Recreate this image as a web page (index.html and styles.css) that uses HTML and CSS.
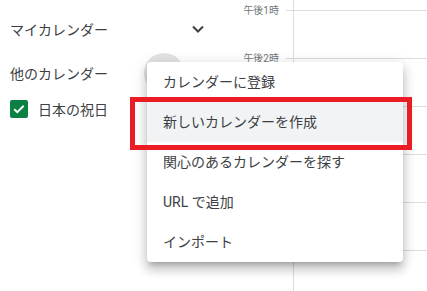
FILE: index.html
```html
<!DOCTYPE html>
<html lang="ja">
<head>
  <meta charset="UTF-8">
  <title>カレンダー</title>
  <meta name="viewport" content="width=device-width, initial-scale=1.0">
  <link rel="stylesheet" href="styles.css">
</head>
<body>
  <div class="page">
    <aside class="sidebar">
      <div class="side-row first">
        <span class="side-title">マイカレンダー</span>
        <span class="icon-btn chevron">
          <svg width="12" height="8" viewBox="0 0 12 8"><path d="M1 1.5l5 5 5-5" fill="none" stroke="#3c4043" stroke-width="2"/></svg>
        </span>
      </div>
      <div class="side-row second">
        <span class="side-title">他のカレンダー</span>
        <span class="add-btn"></span>
        <span class="icon-btn chevron"></span>
      </div>
      <div class="side-row cal">
        <span class="check">
          <svg width="18" height="18" viewBox="0 0 18 18"><path d="M4.2 9.2l3.1 3 6.4-6.4" fill="none" stroke="#fff" stroke-width="2"/></svg>
        </span>
        <span class="cal-name">日本の祝日</span>
      </div>
    </aside>

    <!-- labels below 2pm sit under the menu -->
    <div class="gutter">
      <div class="hour"><span class="hour-label">午後1時</span><span class="tick"></span></div>
      <div class="hour"><span class="hour-label">午後2時</span><span class="tick"></span></div>
      <div class="hour"><span class="hour-label"></span><span class="tick"></span></div>
      <div class="hour"><span class="hour-label"></span><span class="tick"></span></div>
      <div class="hour"><span class="hour-label"></span><span class="tick"></span></div>
      <div class="hour"><span class="hour-label"></span><span class="tick"></span></div>
    </div>

    <div class="grid">
      <div class="cell"></div>
      <div class="cell"></div>
      <div class="cell"></div>
      <div class="cell"></div>
      <div class="cell"></div>
      <div class="cell"></div>
    </div>
  </div>

  <ul class="menu">
    <li>カレンダーに登録</li>
    <li class="active">新しいカレンダーを作成</li>
    <li>関心のあるカレンダーを探す</li>
    <li>URL で追加</li>
    <li>インポート</li>
  </ul>

  <div class="highlight"></div>
</body>
</html>
```

FILE: styles.css
```css
body {
  margin: 0;
  background-color: #fff;
  color: #3c4043;
  font-family: Roboto, "Noto Sans CJK JP", sans-serif;
  overflow: hidden;
}
.page {
  display: flex;
  height: 291px;
}
.sidebar {
  width: 222px;
  padding: 9px 12px 0 10px;
  box-sizing: border-box;
}
.side-row {
  display: flex;
  align-items: center;
  height: 40px;
}
.side-row.second {
  margin-top: 4px;
}
.side-row.cal {
  height: 32px;
}
.side-title {
  font-size: 14px;
  flex: 1;
}
.icon-btn {
  width: 24px;
  height: 24px;
  display: flex;
  align-items: center;
  justify-content: center;
}
.add-btn {
  width: 40px;
  height: 40px;
  border-radius: 50%;
  background-color: #e3e3e3;
  margin-right: 2px;
}
.check {
  width: 18px;
  height: 18px;
  border-radius: 2px;
  background-color: #0b8043;
  display: flex;
}
.cal-name {
  font-size: 14px;
  margin-left: 10px;
}
.gutter {
  width: 71px;
  padding-top: 10px;
}
.hour {
  display: flex;
  justify-content: flex-end;
  height: 48px;
}
.hour-label {
  font-size: 10px;
  line-height: 12px;
  margin-top: -5px;
  margin-right: 7px;
  color: #70757a;
}
.tick {
  width: 7px;
  border-top: 1px solid #dadce0;
}
.grid {
  flex: 1;
  border-left: 1px solid #dadce0;
  padding-top: 10px;
}
.cell {
  height: 47px;
  border-top: 1px solid #dadce0;
}
.menu {
  position: absolute;
  left: 147px;
  top: 62px;
  width: 256px;
  margin: 0;
  padding: 0;
  list-style: none;
  background-color: #fff;
  border-radius: 4px;
  box-shadow: 0 8px 10px 1px rgba(0, 0, 0, 0.14), 0 3px 14px 2px rgba(0, 0, 0, 0.12), 0 5px 5px -3px rgba(0, 0, 0, 0.2);
}
.menu li {
  height: 40px;
  line-height: 40px;
  padding: 0 16px;
  font-size: 14px;
}
.menu li.active {
  background-color: #f1f3f4;
}
.highlight {
  position: absolute;
  left: 130px;
  top: 97px;
  width: 272px;
  height: 43px;
  border: 5px solid #ec1c24;
}
```
